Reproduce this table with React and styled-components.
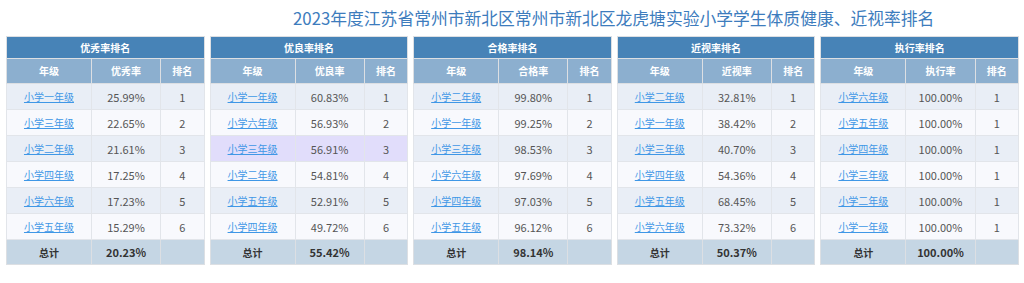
import React from 'react';
import styled, { createGlobalStyle } from 'styled-components';

const GlobalStyle = createGlobalStyle`
    body {
        margin: 0;
        background: #fff;
        font-family: "Noto Sans CJK SC", "Noto Sans", sans-serif;
    }
`;

const Page = styled.div`
    width: 1024px;
    height: 283px;
    box-sizing: border-box;
`;

const Title = styled.h2`
    margin: 0;
    height: 36px;
    line-height: 36px;
    padding-left: 293px;
    font-size: 16.8px;
    font-weight: normal;
    color: #3d7cbd;
    white-space: nowrap;
`;

const Boards = styled.div`
    display: grid;
    grid-template-columns: repeat(5, 1fr);
    gap: 5px;
    padding: 0 5px 0 6px;
`;

const Table = styled.table`
    width: 100%;
    border-collapse: collapse;
    border: 1px solid #dcdfe3;
    table-layout: fixed;
    font-size: 11px;
    line-height: 16px;

    th, td {
        padding: 0;
        text-align: center;
    }
`;

const Caption = styled.th`
    height: 21px;
    background: #4783b7;
    color: #fff;
    font-size: 10px;
    font-weight: bold;
    border: 1px solid #dcdfe3;
`;

const HeadCell = styled.th`
    height: 24px;
    background: #8cafcf;
    color: #fff;
    font-size: 10px;
    font-weight: bold;
    border: 1px solid #dcdfe3;
`;

const Row = styled.tr`
    background: ${(p) => (p.$hl ? '#e1ddfb' : p.$odd ? '#f8f9fd' : '#e9eef6')};
`;

const Cell = styled.td`
    height: 25px;
    color: #555;
    border: 1px solid #e2e5ea;
`;

const GradeLink = styled.a`
    color: #3f97e6;
    font-size: 10px;
    text-decoration: underline;
    cursor: pointer;
`;

const TotalRow = styled.tr`
    background: #c5d6e4;
`;

const TotalCell = styled.td`
    height: 24px;
    font-weight: bold;
    color: #333;
    border: 1px solid #dcdfe3;
`;

const TotalLabel = styled.span`
    font-size: 10px;
`;

const boards = [
    {
        title: '优秀率排名', label: '优秀率', total: '20.23%',
        rows: [['小学一年级', '25.99%'], ['小学三年级', '22.65%'], ['小学二年级', '21.61%'], ['小学四年级', '17.25%'], ['小学六年级', '17.23%'], ['小学五年级', '15.29%']],
    },
    {
        title: '优良率排名', label: '优良率', total: '55.42%', hl: 2,
        rows: [['小学一年级', '60.83%'], ['小学六年级', '56.93%'], ['小学三年级', '56.91%'], ['小学二年级', '54.81%'], ['小学五年级', '52.91%'], ['小学四年级', '49.72%']],
    },
    {
        title: '合格率排名', label: '合格率', total: '98.14%',
        rows: [['小学二年级', '99.80%'], ['小学一年级', '99.25%'], ['小学三年级', '98.53%'], ['小学六年级', '97.69%'], ['小学四年级', '97.03%'], ['小学五年级', '96.12%']],
    },
    {
        title: '近视率排名', label: '近视率', total: '50.37%',
        rows: [['小学二年级', '32.81%'], ['小学一年级', '38.42%'], ['小学三年级', '40.70%'], ['小学四年级', '54.36%'], ['小学五年级', '68.45%'], ['小学六年级', '73.32%']],
    },
    {
        title: '执行率排名', label: '执行率', total: '100.00%', same: true,
        rows: [['小学六年级', '100.00%'], ['小学五年级', '100.00%'], ['小学四年级', '100.00%'], ['小学三年级', '100.00%'], ['小学二年级', '100.00%'], ['小学一年级', '100.00%']],
    },
];

const Board = ({ data }) => (
    <Table>
        <colgroup>
            <col style={{ width: '43%' }} />
            <col style={{ width: '35%' }} />
            <col style={{ width: '22%' }} />
        </colgroup>
        <thead>
            <tr><Caption colSpan={3}>{data.title}</Caption></tr>
            <tr>
                <HeadCell>年级</HeadCell>
                <HeadCell>{data.label}</HeadCell>
                <HeadCell>排名</HeadCell>
            </tr>
        </thead>
        <tbody>
            {data.rows.map((r, i) => (
                <Row key={r[0]} $odd={i % 2 === 1} $hl={data.hl === i}>
                    <Cell><GradeLink>{r[0]}</GradeLink></Cell>
                    <Cell>{r[1]}</Cell>
                    <Cell>{data.same ? 1 : i + 1}</Cell>
                </Row>
            ))}
            <TotalRow>
                <TotalCell><TotalLabel>总计</TotalLabel></TotalCell>
                <TotalCell>{data.total}</TotalCell>
                <TotalCell></TotalCell>
            </TotalRow>
        </tbody>
    </Table>
);

const App = () => (
    <Page>
        <GlobalStyle />
        <Title>2023年度江苏省常州市新北区常州市新北区龙虎塘实验小学学生体质健康、近视率排名</Title>
        <Boards>
            {boards.map((b) => <Board key={b.title} data={b} />)}
        </Boards>
    </Page>
);

export default App;
